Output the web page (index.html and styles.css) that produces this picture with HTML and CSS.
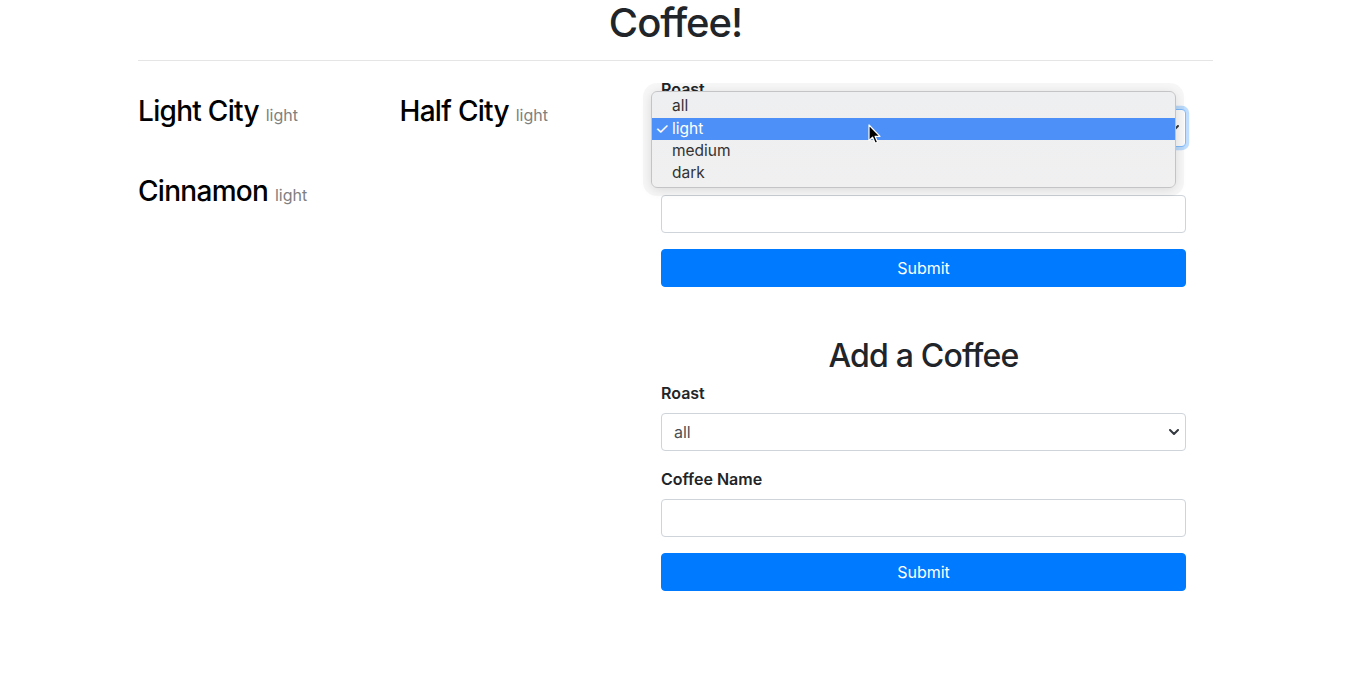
FILE: index.html
```html
<!DOCTYPE html>
<html lang="en">
<head>
<meta charset="utf-8">
<title>Coffee!</title>
<link rel="stylesheet" href="styles.css">
</head>
<body>
<div class="container">
  <h1 class="title">Coffee!</h1>
  <hr class="divider">
  <div class="row">
    <div class="coffees">
      <div class="coffee"><h3 class="coffee-name">Light City <span class="roast">light</span></h3></div>
      <div class="coffee"><h3 class="coffee-name">Half City <span class="roast">light</span></h3></div>
      <div class="coffee"><h3 class="coffee-name">Cinnamon <span class="roast">light</span></h3></div>
    </div>
    <div class="forms">
      <form class="form search-form">
        <div class="form-group">
          <label class="label">Roast</label>
          <div class="select focused">
            <span class="select-value">light</span>
            <svg class="chevron" width="10" height="6" viewBox="0 0 10 6"><path d="M1 1l4 4 4-4" fill="none" stroke="#343a40" stroke-width="2" stroke-linecap="round" stroke-linejoin="round"/></svg>
          </div>
        </div>
        <div class="form-group">
          <label class="label">Coffee Name</label>
          <div class="input"></div>
        </div>
        <button type="button" class="btn">Submit</button>

        <div class="popup">
          <div class="option"><span class="check"></span>all</div>
          <div class="option selected"><span class="check">✓</span>light</div>
          <div class="option"><span class="check"></span>medium</div>
          <div class="option"><span class="check"></span>dark</div>
        </div>
        <svg class="cursor" width="14" height="22" viewBox="0 0 14 22"><path d="M1 1 L1 16.5 L4.6 13.2 L7.2 19.2 L9.6 18.2 L7.1 12.3 L12 12.3 Z" fill="#000" stroke="#fff" stroke-width="1.2" stroke-linejoin="round"/></svg>
      </form>

      <h2 class="add-title">Add a Coffee</h2>
      <form class="form">
        <div class="form-group">
          <label class="label">Roast</label>
          <div class="select">
            <span class="select-value">all</span>
            <svg class="chevron" width="10" height="6" viewBox="0 0 10 6"><path d="M1 1l4 4 4-4" fill="none" stroke="#343a40" stroke-width="2" stroke-linecap="round" stroke-linejoin="round"/></svg>
          </div>
        </div>
        <div class="form-group">
          <label class="label">Coffee Name</label>
          <div class="input"></div>
        </div>
        <button type="button" class="btn">Submit</button>
      </form>
    </div>
  </div>
</div>
</body>
</html>
```
FILE: styles.css
```css
* { box-sizing: border-box; }
html, body { margin: 0; padding: 0; background: #fff; }
body {
  font-family: Inter, "Liberation Sans", sans-serif;
  font-size: 16px;
  line-height: 24px;
  color: #212529;
}
.container {
  width: 1075px;
  margin-left: 138px;
}
.title {
  text-align: center;
  font-size: 40px;
  font-weight: 500;
  line-height: 42px;
  letter-spacing: -0.025em;
  margin: 2px 0 0 0;
}
.divider {
  border: 0;
  border-top: 1px solid rgba(0,0,0,0.1);
  margin: 16px 0 16px 0;
  height: 0;
}
.row {
  display: flex;
}
.coffees {
  width: 523px;
  display: flex;
  flex-wrap: wrap;
  align-content: flex-start;
}
.coffee {
  width: 50%;
  height: 80px;
  padding-top: 18px;
}
.coffee-name {
  margin: 0;
  font-size: 28px;
  font-weight: 500;
  line-height: 33.6px;
  letter-spacing: -0.025em;
  color: #000;
}
.roast {
  font-size: 16px;
  font-weight: 400;
  letter-spacing: 0;
  color: #808080;
}
.forms {
  width: 525px;
}
.form {
  position: relative;
}
.form-group {
  margin-bottom: 16px;
}
.label {
  display: block;
  font-weight: 600;
  margin-bottom: 8px;
}
.select, .input {
  position: relative;
  height: 38px;
  border: 1px solid #ced4da;
  border-radius: 4px;
  background: #fff;
  padding: 6px 12px;
  color: #495057;
  display: flex;
  align-items: center;
}
.select.focused {
  border-color: #80bdff;
  box-shadow: 0 0 0 3.2px rgba(0,123,255,0.25);
}
.select-value { flex: 1; }
.chevron {
  margin-right: -6px;
}
.btn {
  display: block;
  width: 100%;
  height: 38px;
  border: 1px solid #007bff;
  border-radius: 4px;
  background: #007bff;
  color: #fff;
  font-family: inherit;
  font-size: 16px;
  line-height: 24px;
  padding: 6px 12px;
}
.add-title {
  text-align: center;
  font-size: 32px;
  font-weight: 500;
  line-height: 38.4px;
  letter-spacing: -0.025em;
  margin: 50px 0 6px 0;
}
.popup {
  position: absolute;
  left: -10px;
  top: 14px;
  width: 525px;
  height: 97px;
  padding: 3px 0 4px 0;
  background: linear-gradient(#eeeff0, #f0f0f1);
  border: 1px solid #c4c4c6;
  border-radius: 6px;
  box-shadow: 0 0 0 8px rgba(0,0,0,0.03), 0 2px 12px rgba(0,0,0,0.12);
  font-size: 15.5px;
  color: #333;
}
.option {
  height: 22px;
  line-height: 21px;
  display: flex;
}
.option:first-child {
  margin-bottom: 1px;
}
.option.selected {
  background: #4d91f8;
  color: #fff;
}
.check {
  width: 20px;
  padding-left: 3px;
  font-size: 16px;
}
.cursor {
  position: absolute;
  left: 207px;
  top: 47px;
}
```
